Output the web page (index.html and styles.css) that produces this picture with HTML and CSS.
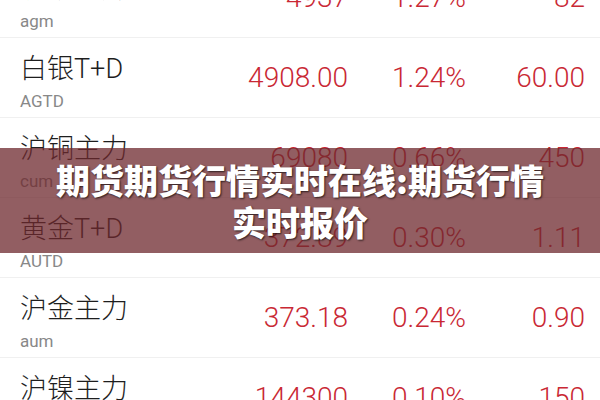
FILE: index.html
```html
<!DOCTYPE html>
<html lang="zh-CN">
<head>
  <meta charset="UTF-8">
  <meta name="viewport" content="width=device-width, initial-scale=1.0">
  <title>期货行情实时报价</title>
  <link rel="stylesheet" href="styles.css">
</head>
<body>
  <div id="quotes">
    <div class="row">
      <div class="name"><div class="title">沪银主力</div><div class="code">agm</div></div>
      <div class="num">4937</div>
      <div class="num">1.27%</div>
      <div class="num">82</div>
    </div>
    <div class="row">
      <div class="name"><div class="title">白银T+D</div><div class="code">AGTD</div></div>
      <div class="num">4908.00</div>
      <div class="num">1.24%</div>
      <div class="num">60.00</div>
    </div>
    <div class="row">
      <div class="name"><div class="title">沪铜主力</div><div class="code">cum</div></div>
      <div class="num">69080</div>
      <div class="num">0.66%</div>
      <div class="num">450</div>
    </div>
    <div class="row">
      <div class="name"><div class="title">黄金T+D</div><div class="code">AUTD</div></div>
      <div class="num">372.89</div>
      <div class="num">0.30%</div>
      <div class="num">1.11</div>
    </div>
    <div class="row">
      <div class="name"><div class="title">沪金主力</div><div class="code">aum</div></div>
      <div class="num">373.18</div>
      <div class="num">0.24%</div>
      <div class="num">0.90</div>
    </div>
    <div class="row">
      <div class="name"><div class="title">沪镍主力</div><div class="code">nim</div></div>
      <div class="num">144300</div>
      <div class="num">0.10%</div>
      <div class="num">150</div>
    </div>
  </div>

  <div class="banner">
    <h1>期货期货行情实时在线:期货行情实时报价</h1>
  </div>
</body>
</html>
```

FILE: styles.css
```css
body {
  margin: 0;
  background: #fff;
  font-family: Roboto, "Noto Sans CJK SC", sans-serif;
  color: #222;
  overflow: hidden;
  height: 400px;
  position: relative;
}

#quotes {
  margin-top: -42px;
}

.row {
  display: grid;
  grid-template-columns: 1fr 120px 118px 119px;
  align-items: center;
  height: 80px;
  padding: 0 15px 0 20px;
  border-bottom: 1px solid #f0f0f0;
  box-sizing: border-box;
}

.name {
  align-self: start;
  padding-top: 16px;
}

.name .title {
  font-size: 27px;
  line-height: 30px;
  font-weight: 300;
  color: #1e1e1e;
}

.name .code {
  font-size: 17px;
  line-height: 18px;
  margin-top: 8px;
  color: #888;
}

.num {
  text-align: right;
  font-size: 28px;
  font-weight: 300;
  color: #c92834;
}

.banner {
  position: absolute;
  left: 0;
  right: 0;
  top: 148px;
  height: 105px;
  background: rgba(110, 40, 45, 0.75);
  display: flex;
  align-items: center;
  justify-content: center;
  padding: 0 50px;
}

.banner h1 {
  margin: 0;
  font-family: "Noto Sans CJK SC", sans-serif;
  font-size: 34px;
  font-weight: 900;
  line-height: 42px;
  color: #fff;
  text-align: center;
  text-shadow: 1px 1px 2px rgba(0, 0, 0, 0.7);
}
```
